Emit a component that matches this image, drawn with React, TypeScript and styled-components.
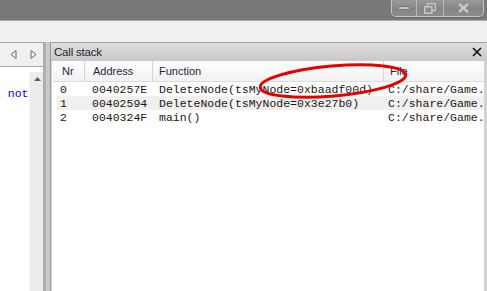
import styled, { createGlobalStyle } from 'styled-components'

const GlobalStyle = createGlobalStyle`
  html, body { margin: 0; padding: 0; }
  body {
    width: 487px;
    height: 291px;
    overflow: hidden;
    background: #f0f0f0;
    font-family: "Liberation Sans", Arial, sans-serif;
  }
`

const Window = styled.div`
  width: 487px;
  height: 291px;
  display: flex;
  flex-direction: column;
  overflow: hidden;
`

const TitleBar = styled.div`
  height: 20px;
  flex: none;
  background: #787878;
  border-bottom: 1px solid #a9a9a9;
  display: flex;
  justify-content: flex-end;
  align-items: flex-start;
  padding-right: 3px;
`

const Controls = styled.div`
  display: flex;
  height: 16px;
  border: 1px solid #c4c4c4;
  border-top: none;
  border-radius: 0 0 5px 5px;
  overflow: hidden;
  box-shadow: 0 1px 0 #6a6a6a;
`

const CtrlButton = styled.div<{ $w: number }>`
  width: ${p => p.$w}px;
  height: 100%;
  display: flex;
  align-items: center;
  justify-content: center;
  background: linear-gradient(#9a9a9a, #858585 55%, #8c8c8c);
  & + & { border-left: 1px solid #b8b8b8; }
  svg { display: block; }
`

const ToolStrip = styled.div`
  height: 21px;
  flex: none;
  background: #f0f0f0;
`

const Workspace = styled.div`
  flex: 1;
  display: flex;
  min-height: 0;
`

const EditorPane = styled.div`
  width: 43px;
  flex: none;
  display: flex;
  flex-direction: column;
  border-top: 1px solid #a8a8a8;
  border-right: 1px solid #a8a8a8;
`

const EditorToolbar = styled.div`
  height: 23px;
  flex: none;
  display: flex;
  align-items: center;
  gap: 13px;
  padding-left: 10px;
  background: #f0f0f0;
  border-bottom: 1px solid #a8a8a8;
`

const EditorBody = styled.div`
  flex: 1;
  display: flex;
  background: #fff;
  padding-top: 5px;
  overflow: hidden;
`

const Code = styled.div`
  flex: 1;
  padding-top: 15px;
  font-family: "Liberation Mono", "Courier New", monospace;
  font-size: 11.5px;
  line-height: 14px;
  white-space: pre;
  text-indent: -6px;
  color: #0000ee;
`

const Cyan = styled.span` color: #00b4c8; `

const ScrollTrack = styled.div`
  width: 15px;
  flex: none;
  background: #ececec;
  border-left: 1px solid #f6f6f6;
  display: flex;
  justify-content: center;
  padding-top: 5px;
  svg { display: block; }
`

const Splitter = styled.div`
  width: 6px;
  flex: none;
  background: #c9c9c9;
  border-left: 2px solid #b2b2b2;
  box-sizing: border-box;
`

const DockPanel = styled.div`
  position: relative;
  flex: 1;
  display: flex;
  flex-direction: column;
  border-top: 1px solid #a0a0a0;
  border-left: 1px solid #9a9a9a;
  background: #d2d2d2;
`

const DockTitle = styled.div`
  height: 18px;
  flex: none;
  display: flex;
  align-items: center;
  justify-content: space-between;
  padding: 0 5px 0 3px;
  background: linear-gradient(#dedede, #c8c8c8);
  font-size: 11.5px;
  color: #1c2633;
  letter-spacing: -0.2px;
`

const GridArea = styled.div`
  flex: 1;
  margin: 0 3px 0 1px;
  background: #fff;
  display: flex;
  flex-direction: column;
`

const HeaderRow = styled.div`
  display: grid;
  grid-template-columns: 32px 68px 231px 1fr;
  height: 20px;
  margin-left: 1px;
  background: linear-gradient(#ffffff, #f1f1f1);
  border-bottom: 1px solid #dcdcdc;
  font-size: 11px;
  color: #1b2737;
`

const HeaderCell = styled.div<{ $pad: number }>`
  display: flex;
  align-items: center;
  padding-left: ${p => p.$pad}px;
  border-right: 1px solid #d6d6d6;
  &:last-child { border-right: none; }
`

const DataRow = styled.div<{ $alt: boolean }>`
  display: grid;
  grid-template-columns: 28px 68px 231px 1fr;
  height: 14px;
  margin-left: 5px;
  background: ${p => (p.$alt ? '#f0f0f0' : '#ffffff')};
  font-family: "Liberation Mono", "Courier New", monospace;
  font-size: 11.5px;
  line-height: 14px;
  color: #24160c;
  white-space: pre;
  overflow: hidden;
`

const DataCell = styled.div<{ $pad: number }>`
  padding-left: ${p => p.$pad}px;
  padding-top: 1px;
  overflow: hidden;
`

const Annotation = styled.svg`
  position: absolute;
  left: 0;
  top: 0;
  width: 100%;
  height: 100%;
  pointer-events: none;
`

const frames = [
  { nr: '0', addr: '0040257E', fn: 'DeleteNode(tsMyNode=0xbaadf00d)', file: 'C:/share/Game.' },
  { nr: '1', addr: '00402594', fn: 'DeleteNode(tsMyNode=0x3e27b0)', file: 'C:/share/Game.' },
  { nr: '2', addr: '0040324F', fn: 'main()', file: 'C:/share/Game.' },
]

function Arrow({ dir }: { dir: 'left' | 'right' }) {
  const pts = dir === 'left' ? '6,0.5 1,4.5 6,8.5' : '1,0.5 6,4.5 1,8.5'
  return (
    <svg width="7" height="9" viewBox="0 0 7 9">
      <polygon points={pts} fill="none" stroke="#6a6a6a" strokeWidth="1" />
    </svg>
  )
}

export default function App() {
  return (
    <Window>
      <GlobalStyle />
      <TitleBar>
        <Controls>
          <CtrlButton $w={24}>
            <svg width="12" height="6" viewBox="0 0 12 6">
              <rect x="0.5" y="1.5" width="11" height="3" fill="#c4c4c4" stroke="#7a7a7a" />
            </svg>
          </CtrlButton>
          <CtrlButton $w={26}>
            <svg width="12" height="11" viewBox="0 0 12 11">
              <rect x="3.5" y="0.5" width="8" height="7" fill="none" stroke="#c4c4c4" strokeWidth="1.6" />
              <rect x="0.8" y="3.8" width="7" height="6.4" fill="#8a8a8a" stroke="#c4c4c4" strokeWidth="1.6" />
            </svg>
          </CtrlButton>
          <CtrlButton $w={39}>
            <svg width="13" height="10" viewBox="0 0 13 10">
              <path d="M2 1 L11 9 M11 1 L2 9" stroke="#c8c8c8" strokeWidth="2.4" />
            </svg>
          </CtrlButton>
        </Controls>
      </TitleBar>
      <ToolStrip />
      <Workspace>
        <EditorPane>
          <EditorToolbar>
            <Arrow dir="left" />
            <Arrow dir="right" />
          </EditorToolbar>
          <EditorBody>
            <Code><Cyan>x</Cyan> not</Code>
            <ScrollTrack>
              <svg width="7" height="4" viewBox="0 0 7 4">
                <polygon points="0,4 3.5,0 7,4" fill="#606060" />
              </svg>
            </ScrollTrack>
          </EditorBody>
        </EditorPane>
        <Splitter />
        <DockPanel>
          <DockTitle>
            Call stack
            <svg width="10" height="10" viewBox="0 0 10 10">
              <path d="M1 1 L9 9 M9 1 L1 9" stroke="#111" strokeWidth="1.6" />
            </svg>
          </DockTitle>
          <GridArea>
            <HeaderRow>
              <HeaderCell $pad={9}>Nr</HeaderCell>
              <HeaderCell $pad={8}>Address</HeaderCell>
              <HeaderCell $pad={6}>Function</HeaderCell>
              <HeaderCell $pad={6}>File</HeaderCell>
            </HeaderRow>
            {frames.map((f, i) => (
              <DataRow key={f.nr} $alt={i % 2 === 1}>
                <DataCell $pad={3}>{f.nr}</DataCell>
                <DataCell $pad={7}>{f.addr}</DataCell>
                <DataCell $pad={6}>{f.fn}</DataCell>
                <DataCell $pad={4}>{f.file}</DataCell>
              </DataRow>
            ))}
          </GridArea>
          <Annotation>
            <ellipse cx="282" cy="38" rx="73" ry="15" transform="rotate(-5 282 38)"
              fill="none" stroke="#e60000" strokeWidth="3" />
          </Annotation>
        </DockPanel>
      </Workspace>
    </Window>
  )
}
